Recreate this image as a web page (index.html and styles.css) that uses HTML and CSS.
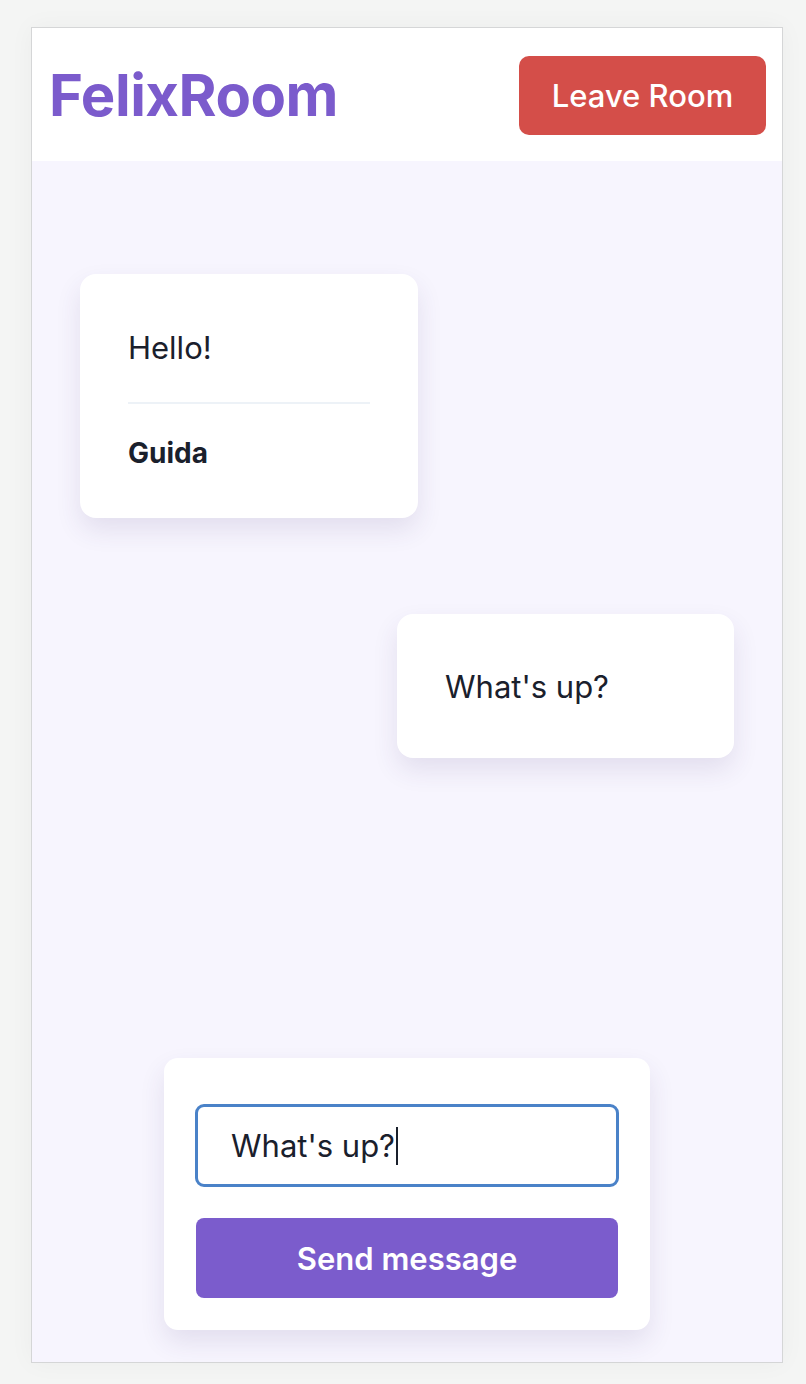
FILE: index.html
```html
<!DOCTYPE html>
<html lang="en">
<head>
<meta charset="utf-8">
<title>FelixRoom</title>
<link rel="stylesheet" href="styles.css">
</head>
<body>
<div class="app">
  <header class="header">
    <h1 class="logo">FelixRoom</h1>
    <button class="leave-btn" type="button">Leave Room</button>
  </header>
  <main class="room">
    <section class="messages">
      <article class="message message-left">
        <p class="message-text">Hello!</p>
        <hr class="message-divider">
        <p class="message-author">Guida</p>
      </article>
      <article class="message message-right">
        <p class="message-text">What's up?</p>
      </article>
    </section>
    <form class="composer">
      <div class="input-wrap">
        <div class="message-input"><span class="input-value">What's up?</span><span class="caret"></span></div>
      </div>
      <button class="send-btn" type="button">Send message</button>
    </form>
  </main>
</div>
</body>
</html>
```

FILE: styles.css
```css
html, body {
  margin: 0;
  padding: 0;
}

body {
  background: #f4f5f4;
  font-family: Inter, "Noto Sans", "Liberation Sans", sans-serif;
  color: #1a202c;
  padding: 27px 23px 21px 31px;
}

.app {
  width: 752px;
  height: 1336px;
  box-sizing: border-box;
  border: 1px solid #d5d6d7;
  background: #f7f5fe;
  display: flex;
  flex-direction: column;
  box-shadow: 0 0 24px rgba(0, 0, 0, 0.04);
}

.header {
  background: #ffffff;
  height: 133px;
  box-sizing: border-box;
  padding: 0 16px 0 17px;
  display: flex;
  align-items: center;
  justify-content: space-between;
  flex: none;
}

.logo {
  margin: 0;
  font-size: 58px;
  font-weight: 700;
  color: #7b5bcc;
  letter-spacing: -0.5px;
}

.leave-btn {
  font-family: inherit;
  background: #d44e49;
  color: #ffffff;
  border: none;
  border-radius: 10px;
  width: 247px;
  height: 79px;
  font-size: 31px;
  font-weight: 500;
  margin-top: 1px;
}

.room {
  flex: 1;
  display: flex;
  flex-direction: column;
}

.messages {
  flex: 1;
  display: flex;
  flex-direction: column;
  gap: 96px;
  padding: 113px 48px 0;
}

.message {
  width: 338px;
  box-sizing: border-box;
  background: #ffffff;
  border-radius: 16px;
  padding: 51px 48px 45px;
  box-shadow: 0 12px 26px rgba(60, 50, 110, 0.11);
}

.message-left {
  align-self: flex-start;
}

.message-right {
  align-self: flex-end;
  width: 337px;
  padding-top: 50px;
  padding-bottom: 49px;
}

.message-text {
  margin: 0;
  font-size: 31px;
  line-height: 45px;
  color: #1a202c;
}

.message-divider {
  border: none;
  height: 2px;
  background: #edf2f7;
  margin: 32px 0 30px;
}

.message-author {
  margin: 0;
  font-size: 28px;
  line-height: 39px;
  font-weight: 700;
  color: #1a202c;
}

.composer {
  align-self: center;
  width: 486px;
  box-sizing: border-box;
  background: #ffffff;
  border-radius: 14px;
  padding: 46px 32px 32px;
  margin-bottom: 32px;
  display: flex;
  flex-direction: column;
  gap: 31px;
  box-shadow: 0 12px 26px rgba(60, 50, 110, 0.11);
}

.input-wrap {
  display: flex;
}

.message-input {
  flex: 1;
  height: 83px;
  box-sizing: border-box;
  margin: 0 -1px;
  border: 3px solid #4a82c8;
  border-radius: 9px;
  padding: 0 33px;
  display: flex;
  align-items: center;
  font-size: 31px;
  color: #1a202c;
}

.caret {
  display: inline-block;
  width: 2px;
  height: 38px;
  background: #1a202c;
  margin-left: 1px;
}

.send-btn {
  font-family: inherit;
  background: #7b5ccc;
  color: #ffffff;
  border: none;
  border-radius: 8px;
  height: 80px;
  font-size: 31px;
  font-weight: 600;
}
```
